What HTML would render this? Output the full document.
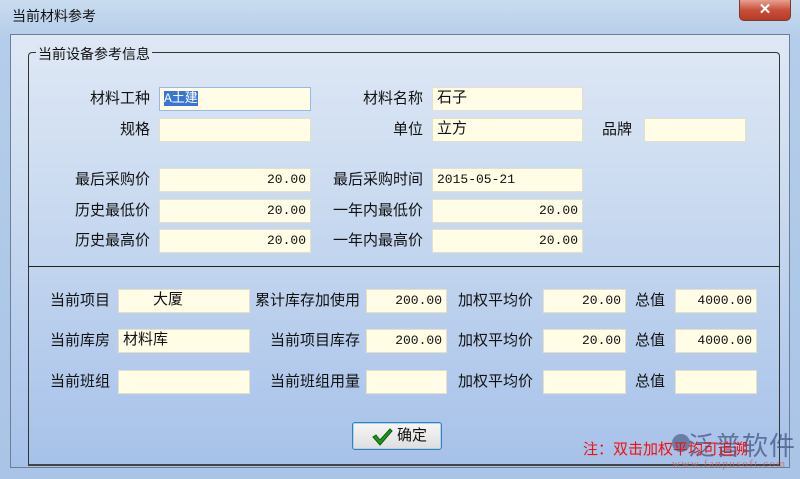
<!DOCTYPE html>
<html><head><meta charset="utf-8"><style>
*{margin:0;padding:0;box-sizing:border-box}
body{width:800px;height:479px;overflow:hidden;background:linear-gradient(#c9dcef,#b4cdea 40px,#a9c4e6);font-family:"Liberation Sans","Noto Sans CJK SC",sans-serif;font-size:14px;color:#111;position:relative}
.t{position:absolute;left:12px;top:6px;font-size:14px;color:#111}
.x{position:absolute;left:739px;top:0;width:52px;height:21px;background:linear-gradient(#e8a090,#c8503a 50%,#b83a25);border:1px solid #7a3a30;border-top:none;border-radius:0 0 5px 5px;color:#fff;font-weight:bold;text-align:center;line-height:19px;font-size:15px}
.panel{position:absolute;left:10px;top:34px;width:780px;height:434px;border:1px solid #6d7f95;background:linear-gradient(#dfe8f5,#c9daf0 40%,#a6c1e9);}
.grp{position:absolute;left:28px;top:52px;width:752px;height:414px;border:1px solid #333;border-radius:4px 4px 0 0;border-bottom:2px solid #444}
.gl{position:absolute;left:36px;top:44px;background:#dce6f4;padding:0 2px;font-size:14px}
.div{position:absolute;left:28px;top:266px;width:752px;height:1px;background:#222}
.l{position:absolute;font-size:15px;white-space:nowrap;line-height:24px}
.r{text-align:right}
.i{position:absolute;height:24px;background:#fffde6;border:1px solid #e4e1c8;font-family:"Liberation Mono","Noto Sans CJK SC",monospace;font-size:13px;line-height:22px;padding:0 4px;white-space:nowrap}
.n{text-align:right}
.btn{position:absolute;left:352px;top:422px;width:90px;height:28px;border:1px solid #3c7fb1;border-radius:3px;background:linear-gradient(#f6f6f6,#dedede);box-shadow:0 0 0 1px #a8d4f2 inset;font-size:15px;line-height:26px;padding-left:44px}
.note{position:absolute;left:583px;top:438px;color:#f01010;font-size:15px}
.wm{position:absolute;left:688px;top:426px;color:rgba(60,80,120,.7);font-size:26px;letter-spacing:1px}
.wlogo{position:absolute;left:672px;top:434px;width:18px;height:18px;border-radius:50%;background:rgba(60,80,120,.6)}
.wu{position:absolute;left:672px;top:458px;color:rgba(200,100,90,.75);font-size:11px;font-family:"Liberation Serif",serif;letter-spacing:1.5px}
</style></head><body>
<div class="t">当前材料参考</div>
<div class="x">✕</div>
<div class="panel"></div>
<div class="grp"></div>
<div class="gl">当前设备参考信息</div>
<div class="div"></div>

<div class="l r" style="left:60px;width:90px;top:87px">材料工种</div>
<div class="i" style="left:159px;top:87px;width:152px;border-color:#9cb8dc"><span style="background:#3875d7;color:#fff">A土建</span></div>
<div class="l r" style="left:333px;width:90px;top:87px">材料名称</div>
<div class="i" style="left:432px;top:87px;width:151px;font-size:15px">石子</div>

<div class="l r" style="left:60px;width:90px;top:118px">规格</div>
<div class="i" style="left:159px;top:118px;width:152px"></div>
<div class="l r" style="left:333px;width:90px;top:118px">单位</div>
<div class="i" style="left:432px;top:118px;width:151px;font-size:15px">立方</div>
<div class="l r" style="left:580px;width:52px;top:118px">品牌</div>
<div class="i" style="left:644px;top:118px;width:102px"></div>

<div class="l r" style="left:40px;width:110px;top:168px">最后采购价</div>
<div class="i n" style="left:159px;top:168px;width:152px">20.00</div>
<div class="l r" style="left:313px;width:110px;top:168px">最后采购时间</div>
<div class="i" style="left:432px;top:168px;width:151px">2015-05-21</div>

<div class="l r" style="left:40px;width:110px;top:199px">历史最低价</div>
<div class="i n" style="left:159px;top:199px;width:152px">20.00</div>
<div class="l r" style="left:313px;width:110px;top:199px">一年内最低价</div>
<div class="i n" style="left:432px;top:199px;width:151px">20.00</div>

<div class="l r" style="left:40px;width:110px;top:229px">历史最高价</div>
<div class="i n" style="left:159px;top:229px;width:152px">20.00</div>
<div class="l r" style="left:313px;width:110px;top:229px">一年内最高价</div>
<div class="i n" style="left:432px;top:229px;width:151px">20.00</div>

<div class="l" style="left:50px;top:289px">当前项目</div>
<div class="i" style="left:118px;top:289px;width:132px;font-size:15px;padding-left:34px">大厦</div>
<div class="l r" style="left:250px;width:110px;top:289px">累计库存加使用</div>
<div class="i n" style="left:366px;top:289px;width:81px">200.00</div>
<div class="l" style="left:458px;top:289px">加权平均价</div>
<div class="i n" style="left:543px;top:289px;width:83px">20.00</div>
<div class="l" style="left:635px;top:289px">总值</div>
<div class="i n" style="left:675px;top:289px;width:82px">4000.00</div>

<div class="l" style="left:50px;top:329px">当前库房</div>
<div class="i" style="left:118px;top:329px;width:132px;font-size:15px">材料库</div>
<div class="l r" style="left:250px;width:110px;top:329px">当前项目库存</div>
<div class="i n" style="left:366px;top:329px;width:81px">200.00</div>
<div class="l" style="left:458px;top:329px">加权平均价</div>
<div class="i n" style="left:543px;top:329px;width:83px">20.00</div>
<div class="l" style="left:635px;top:329px">总值</div>
<div class="i n" style="left:675px;top:329px;width:82px">4000.00</div>

<div class="l" style="left:50px;top:370px">当前班组</div>
<div class="i" style="left:118px;top:370px;width:132px"></div>
<div class="l r" style="left:250px;width:110px;top:370px">当前班组用量</div>
<div class="i" style="left:366px;top:370px;width:81px"></div>
<div class="l" style="left:458px;top:370px">加权平均价</div>
<div class="i" style="left:543px;top:370px;width:83px"></div>
<div class="l" style="left:635px;top:370px">总值</div>
<div class="i" style="left:675px;top:370px;width:82px"></div>

<div class="btn"><svg style="position:absolute;left:18px;top:4px" width="22" height="20" viewBox="0 0 22 20"><path d="M2 10 L5 8 L9 13 L19 2 L21 4 L9 18 Z" fill="#1a9a1a" stroke="#0b5a0b" stroke-width="1"/></svg>确定</div>
<div class="wlogo"></div>
<div class="wm">泛普软件</div>
<div class="wu">www.fanpusoft.com</div>
<div class="note">注：双击加权平均可追溯</div>
</body></html>
